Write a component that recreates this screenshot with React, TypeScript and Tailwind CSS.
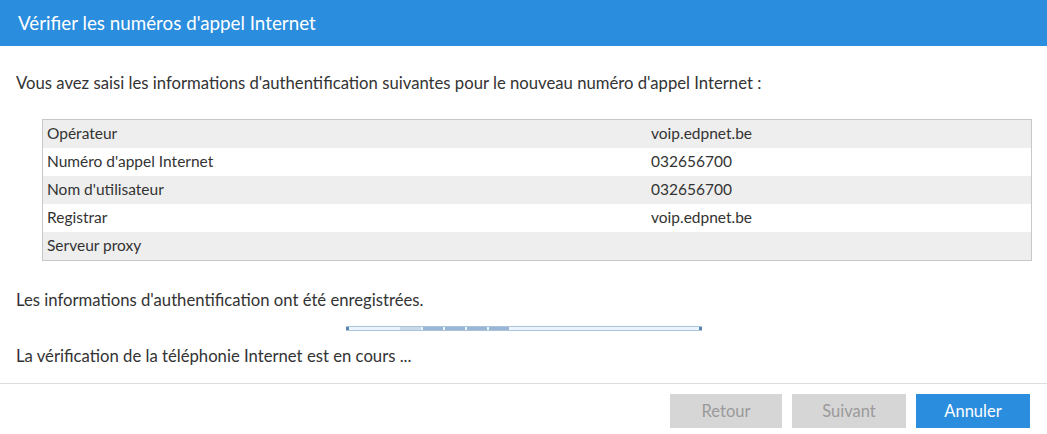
const rows = [
  { label: 'Opérateur', value: 'voip.edpnet.be' },
  { label: "Numéro d'appel Internet", value: '032656700' },
  { label: "Nom d'utilisateur", value: '032656700' },
  { label: 'Registrar', value: 'voip.edpnet.be' },
  { label: 'Serveur proxy', value: '' },
];

export default function App() {
  return (
    <div className="w-[1047px] h-[434px] bg-white text-[#333] font-['Lato','Open_Sans',sans-serif] overflow-hidden">
      {/* Title bar */}
      <div className="h-[46px] bg-[#2a8ddd] px-[18px] flex items-center">
        <h1 className="text-white text-[18.8px] leading-none">Vérifier les numéros d'appel Internet</h1>
      </div>

      <div className="px-[16px]">
        <p className="mt-[26px] text-[16.7px] leading-[22px]">
          Vous avez saisi les informations d'authentification suivantes pour le nouveau numéro d'appel Internet :
        </p>

        <div className="mt-[25px] ml-[26px] w-[990px] border border-[#c8c8c8]">
          {rows.map((row, i) => (
            <div
              key={row.label}
              className={'h-[28px] flex items-center text-[15.5px] ' + (i % 2 === 0 ? 'bg-[#eeeeee]' : 'bg-white')}
            >
              <div className="w-[608px] pl-[4px]">{row.label}</div>
              <div>{row.value}</div>
            </div>
          ))}
        </div>

        <p className="mt-[28px] text-[16.7px] leading-[22px]">Les informations d'authentification ont été enregistrées.</p>

        {/* Progress bar */}
        <div className="mt-[15px] ml-[330px] w-[356px] h-[5px] flex items-stretch bg-[#eaf5fd] border-y border-[#a9c3db]">
          <div className="w-[3px] bg-[#5b85b1]" />
          <div className="flex-1 flex items-stretch gap-[2px] pl-[51px]">
            <div className="w-[21px] bg-[#c8d9ea]" />
            <div className="w-[20px] bg-[#9bb6d4]" />
            <div className="w-[20px] bg-[#9bb6d4]" />
            <div className="w-[20px] bg-[#9bb6d4]" />
            <div className="w-[20px] bg-[#9bb6d4]" />
          </div>
          <div className="w-[3px] bg-[#5b85b1]" />
        </div>

        <p className="mt-[14px] text-[16.7px] leading-[22px]">La vérification de la téléphonie Internet est en cours ...</p>
      </div>

      <div className="mt-[16px] border-t border-[#dddddd] flex justify-end gap-[10px] pr-[17px] pt-[10px]">
        <button className="w-[112px] h-[34px] bg-[#d6d6d6] text-[#9a9a9a] text-[16.5px]">Retour</button>
        <button className="w-[114px] h-[34px] bg-[#d6d6d6] text-[#9a9a9a] text-[16.5px]">Suivant</button>
        <button className="w-[114px] h-[34px] bg-[#2a8ddd] text-white text-[16.5px]">Annuler</button>
      </div>
    </div>
  );
}
